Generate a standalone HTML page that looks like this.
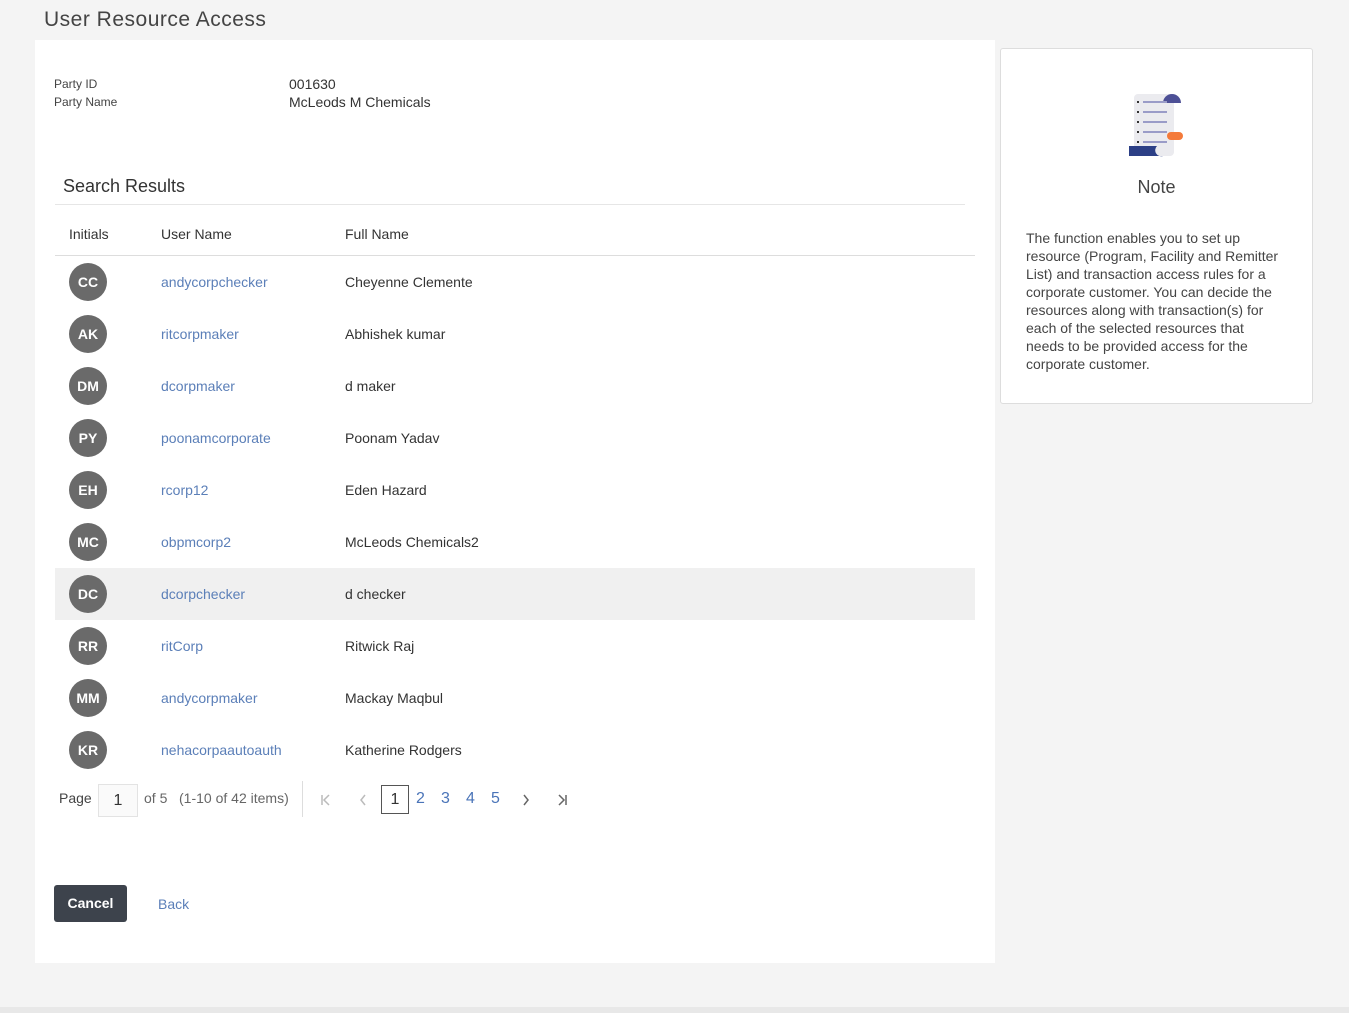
<!DOCTYPE html>
<html><head><style>
body{margin:0;width:1366px;height:1013px;background:#f4f4f4;font-family:"Liberation Sans",sans-serif;position:relative;overflow:hidden;color:#333}
.a{position:absolute}
h1{position:absolute;left:44px;top:8px;margin:0;font-weight:normal;font-size:21px;letter-spacing:0.5px;color:#444}
.main{left:35px;top:40px;width:960px;height:923px;background:#fff}
.lbl{font-size:12px;color:#444}
.val{font-size:14px;color:#333}
.row{position:absolute;left:55px;width:920px;height:52px;font-size:14px}
.av{position:absolute;left:14px;top:7px;width:38px;height:38px;border-radius:50%;background:#6a6a6a;color:#fff;font-size:14px;font-weight:bold;text-align:center;line-height:38px}
.un{position:absolute;left:106px;top:18px;color:#5b7fb8}
.fn{position:absolute;left:290px;top:18px;color:#333}
.note{left:1000px;top:48px;width:311px;height:354px;background:#fff;border:1px solid #ddd;border-radius:3px}
</style></head><body>
<h1>User Resource Access</h1>
<div class="a main"></div>
<div class="a lbl" style="left:54px;top:77px">Party ID</div>
<div class="a lbl" style="left:54px;top:95px">Party Name</div>
<div class="a val" style="left:289px;top:76px">001630</div>
<div class="a val" style="left:289px;top:94px">McLeods M Chemicals</div>
<div class="a" style="left:63px;top:176px;font-size:18px;color:#333">Search Results</div>
<div class="a" style="left:55px;top:204px;width:910px;height:1px;background:#e6e6e6"></div>
<div class="a" style="left:69px;top:226px;font-size:14px">Initials</div>
<div class="a" style="left:161px;top:226px;font-size:14px">User Name</div>
<div class="a" style="left:345px;top:226px;font-size:14px">Full Name</div>
<div class="a" style="left:55px;top:255px;width:920px;height:1px;background:#ddd"></div>
<div class="row" style="top:256px"><div class="av">CC</div><div class="un">andycorpchecker</div><div class="fn">Cheyenne Clemente</div></div>
<div class="row" style="top:308px"><div class="av">AK</div><div class="un">ritcorpmaker</div><div class="fn">Abhishek kumar</div></div>
<div class="row" style="top:360px"><div class="av">DM</div><div class="un">dcorpmaker</div><div class="fn">d maker</div></div>
<div class="row" style="top:412px"><div class="av">PY</div><div class="un">poonamcorporate</div><div class="fn">Poonam Yadav</div></div>
<div class="row" style="top:464px"><div class="av">EH</div><div class="un">rcorp12</div><div class="fn">Eden Hazard</div></div>
<div class="row" style="top:516px"><div class="av">MC</div><div class="un">obpmcorp2</div><div class="fn">McLeods Chemicals2</div></div>
<div class="row" style="top:568px;background:#f0f0f0"><div class="av">DC</div><div class="un">dcorpchecker</div><div class="fn">d checker</div></div>
<div class="row" style="top:620px"><div class="av">RR</div><div class="un">ritCorp</div><div class="fn">Ritwick Raj</div></div>
<div class="row" style="top:672px"><div class="av">MM</div><div class="un">andycorpmaker</div><div class="fn">Mackay Maqbul</div></div>
<div class="row" style="top:724px"><div class="av">KR</div><div class="un">nehacorpaautoauth</div><div class="fn">Katherine Rodgers</div></div>
<div class="a" style="left:59px;top:790px;font-size:14px;color:#444">Page</div>
<div class="a" style="left:98px;top:784px;width:38px;height:31px;border:1px solid #e3e3e3;background:#fafafa;font-size:16px;text-align:center;line-height:31px">1</div>
<div class="a" style="left:144px;top:790px;font-size:14px;color:#666">of 5 &nbsp;&nbsp;(1-10 of 42 items)</div>
<div class="a" style="left:302px;top:781px;width:1px;height:36px;background:#ddd"></div>
<svg class="a" style="left:320px;top:794px" width="10" height="12"><path d="M2 1v10M9 1L4 6l5 5" stroke="#bbb" stroke-width="1.5" fill="none"/></svg>
<svg class="a" style="left:359px;top:794px" width="8" height="12"><path d="M6 1L2 6l4 5" stroke="#bbb" stroke-width="1.5" fill="none"/></svg>
<div class="a" style="left:381px;top:785px;width:26px;height:27px;border:1px solid #555;font-size:16px;text-align:center;line-height:27px">1</div>
<div class="a" style="left:416px;top:790px;font-size:16px;color:#4a74b8">2</div>
<div class="a" style="left:441px;top:790px;font-size:16px;color:#4a74b8">3</div>
<div class="a" style="left:466px;top:790px;font-size:16px;color:#4a74b8">4</div>
<div class="a" style="left:491px;top:790px;font-size:16px;color:#4a74b8">5</div>
<svg class="a" style="left:522px;top:794px" width="8" height="12"><path d="M2 1l4 5-4 5" stroke="#666" stroke-width="1.5" fill="none"/></svg>
<svg class="a" style="left:558px;top:794px" width="10" height="12"><path d="M1 1l5 5-5 5M8 1v10" stroke="#666" stroke-width="1.5" fill="none"/></svg>
<div class="a" style="left:54px;top:885px;width:73px;height:37px;background:#3d434c;border-radius:3px;color:#fff;font-size:14px;font-weight:bold;text-align:center;line-height:37px">Cancel</div>
<div class="a" style="left:158px;top:896px;font-size:14px;color:#5b7fb8">Back</div>
<div class="a note"></div>
<svg class="a" style="left:1126px;top:92px" width="60" height="68" viewBox="0 0 60 68">
<rect x="8" y="2" width="40" height="62" rx="4" fill="#ebebef"/>
<path d="M46 2a9 9 0 0 1 9 9h-18a9 9 0 0 1 9-9z" fill="#4d5096"/>
<g fill="#9a9cc8"><rect x="17" y="9" width="24" height="2"/><rect x="17" y="19" width="24" height="2"/><rect x="17" y="29" width="24" height="2"/><rect x="17" y="39" width="24" height="2"/><rect x="17" y="49" width="24" height="2"/></g>
<g fill="#333"><rect x="11" y="9" width="2" height="2"/><rect x="11" y="19" width="2" height="2"/><rect x="11" y="29" width="2" height="2"/><rect x="11" y="39" width="2" height="2"/><rect x="11" y="49" width="2" height="2"/></g>
<rect x="41" y="40" width="16" height="8" rx="4" fill="#f47a3a"/>
<path d="M3 54h28a6 6 0 0 0 6 10H3z" fill="#2c3f86"/>
</svg>
<div class="a" style="left:1000px;top:177px;width:313px;text-align:center;font-size:18px;color:#444">Note</div>
<div class="a" style="left:1026px;top:229px;width:256px;font-size:14px;line-height:18px;color:#444">The function enables you to set up resource (Program, Facility and Remitter List) and transaction access rules for a corporate customer. You can decide the resources along with transaction(s) for each of the selected resources that needs to be provided access for the corporate customer.</div>
<div class="a" style="left:1349px;top:0;width:17px;height:1013px;background:#fff"></div>
<div class="a" style="left:0;top:1007px;width:1349px;height:6px;background:#e8e8e8"></div>
</body></html>
